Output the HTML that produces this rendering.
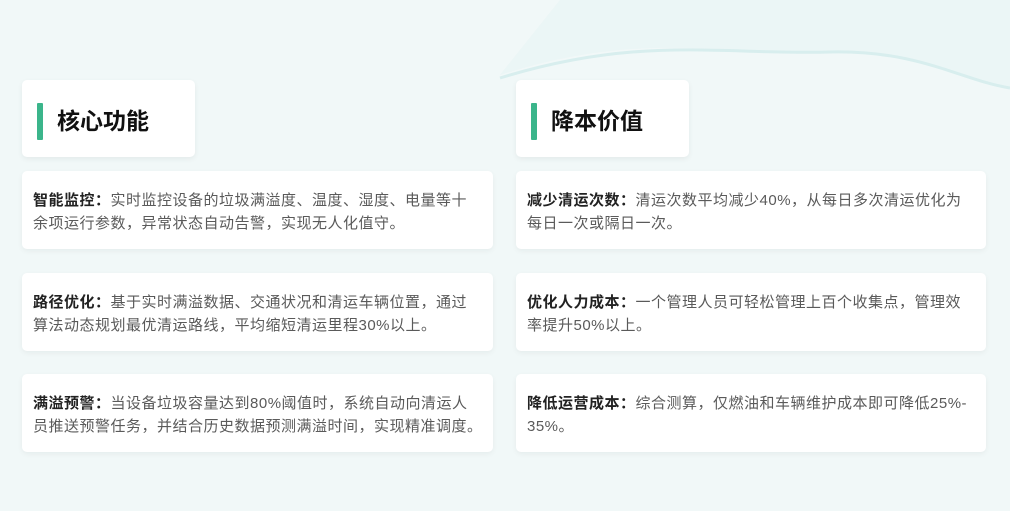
<!DOCTYPE html><html><head><meta charset="utf-8"><style>
*{margin:0;padding:0;box-sizing:border-box}
body{width:1010px;height:511px;overflow:hidden;background:#f1f8f8;font-family:"Liberation Sans","Noto Sans CJK SC",sans-serif;position:relative}
.h{position:absolute;top:80px;width:173px;height:77px;background:#fff;border-radius:5px;box-shadow:0 2px 6px rgba(0,0,0,.06)}
.h i{position:absolute;left:15px;top:23px;width:6px;height:37px;background:#3bb58b;border-radius:1px}
.h b{position:absolute;left:35px;top:26px;font-size:23px;color:#111;line-height:30px}
.c{position:absolute;height:78px;background:#fff;border-radius:5px;box-shadow:0 2px 6px rgba(0,0,0,.05);padding:18px 0 0 11px;font-size:15px;letter-spacing:.5px;line-height:23px;color:#5a5a5a;white-space:nowrap}
.c b{color:#222}
</style></head><body>
<svg style="position:absolute;left:0;top:0" width="1010" height="120"><path d="M500 75 C640 30 720 55 830 52 C920 50 960 80 1010 88 L1010 0 L560 0 Z" fill="#e6f4f4" opacity=".5"/><path d="M500 78 C640 35 720 55 830 52 C920 50 960 80 1010 88" stroke="#d8eeee" stroke-width="3" fill="none"/></svg>
<div class="h" style="left:22px"><i></i><b>核心功能</b></div>
<div class="h" style="left:516px"><i></i><b>降本价值</b></div>
<div class="c" style="left:22px;top:171px;width:471px"><b>智能监控：</b>实时监控设备的垃圾满溢度、温度、湿度、电量等十<br>余项运行参数，异常状态自动告警，实现无人化值守。</div>
<div class="c" style="left:22px;top:273px;width:471px"><b>路径优化：</b>基于实时满溢数据、交通状况和清运车辆位置，通过<br>算法动态规划最优清运路线，平均缩短清运里程30%以上。</div>
<div class="c" style="left:22px;top:374px;width:471px"><b>满溢预警：</b>当设备垃圾容量达到80%阈值时，系统自动向清运人<br>员推送预警任务，并结合历史数据预测满溢时间，实现精准调度。</div>
<div class="c" style="left:516px;top:171px;width:470px"><b>减少清运次数：</b>清运次数平均减少40%，从每日多次清运优化为<br>每日一次或隔日一次。</div>
<div class="c" style="left:516px;top:273px;width:470px"><b>优化人力成本：</b>一个管理人员可轻松管理上百个收集点，管理效<br>率提升50%以上。</div>
<div class="c" style="left:516px;top:374px;width:470px"><b>降低运营成本：</b>综合测算，仅燃油和车辆维护成本即可降低25%-<br>35%。</div>
</body></html>
